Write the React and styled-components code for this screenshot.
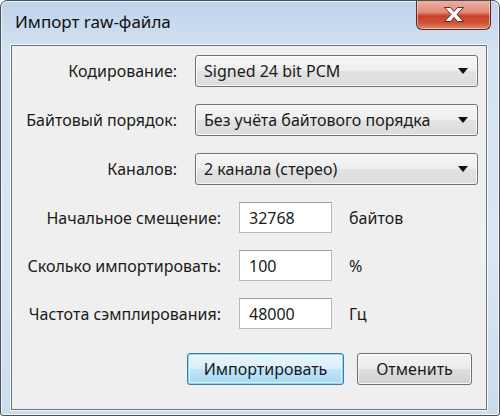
import { Fragment } from "react"
import styled, { createGlobalStyle } from "styled-components"

const Global = createGlobalStyle`
  html, body { margin: 0; padding: 0; background: #fff; }
  * { box-sizing: border-box; }
`

const UI_FONT = `"Noto Sans", "DejaVu Sans", sans-serif`

const Win = styled.div`
  width: 500px;
  height: 416px;
  display: flex;
  flex-direction: column;
  border: 1px solid #47515c;
  border-radius: 7px 7px 3px 3px;
  background: linear-gradient(180deg, #bfd3ea 0%, #d3e2f2 12%, #d9e6f3 60%, #cbdcee 100%);
  box-shadow: inset 0 0 0 1px rgba(255,255,255,0.7);
  font-family: ${UI_FONT};
  color: #1b1b1b;
  overflow: hidden;
`

const TitleBar = styled.div`
  height: 44px;
  display: flex;
  justify-content: space-between;
  align-items: flex-start;
  padding-left: 14px;
  padding-right: 8px;
`

const Title = styled.div`
  font-size: 17px;
  line-height: 1;
  padding-top: 12px;
  color: #111;
`

const CloseBtn = styled.div`
  width: 75px;
  height: 30px;
  margin-top: -1px;
  border: 1px solid #5a2a22;
  border-top: none;
  border-radius: 0 0 6px 6px;
  background: linear-gradient(180deg, #eeb3a6 0%, #e28a78 42%, #c9402a 55%, #cc5238 78%, #e5866a 100%);
  box-shadow: inset 0 0 0 1px rgba(255,255,255,0.45);
  display: flex;
  align-items: center;
  justify-content: center;
`

const Client = styled.div`
  flex: 1;
  margin: 0 12px 5px 10px;
  border: 1px solid #6b737b;
  box-shadow: 0 0 0 1px rgba(255,255,255,0.8);
  background: #efefef;
  padding: 9px 4px 23px 0;
  display: flex;
  flex-direction: column;
  gap: 17px;
`

const Grid = styled.div`
  display: grid;
  grid-template-columns: ${p => p.$label}px ${p => p.$field}px auto;
  column-gap: 18px;
  row-gap: 17px;
  align-items: center;
`

const Label = styled.div`
  text-align: right;
  font-size: 16px;
  white-space: nowrap;
`

const Combo = styled.div`
  height: 32px;
  border: 1px solid #737373;
  border-radius: 3px;
  background: linear-gradient(180deg, #f6f6f6 0%, #eeeeee 48%, #e2e2e2 52%, #dcdcdc 100%);
  box-shadow: inset 0 0 0 1px rgba(255,255,255,0.7);
  display: flex;
  align-items: center;
  justify-content: space-between;
  padding: 0 9px 0 8px;
  font-size: 16px;
  white-space: nowrap;
`

const Field = styled.div`
  height: 31px;
  background: #fff;
  border: 1px solid #b5b9be;
  border-top-color: #9a9ea4;
  display: flex;
  align-items: center;
  padding-left: 9px;
  font-size: 16px;
`

const Unit = styled.div`
  font-size: 16px;
  margin-left: -1px;
`

const Buttons = styled.div`
  display: flex;
  justify-content: flex-end;
  gap: 13px;
  margin-top: 7px;
  padding-right: 10px;
`

const Button = styled.div`
  width: ${p => p.$w}px;
  height: 32px;
  border-radius: 3px;
  display: flex;
  align-items: center;
  justify-content: center;
  font-size: 16px;
  border: 1px solid ${p => (p.$primary ? "#3d7bad" : "#707070")};
  background: ${p =>
    p.$primary
      ? "linear-gradient(180deg, #e9f5fd 0%, #d9effb 48%, #bee4f8 52%, #a9daf4 100%)"
      : "linear-gradient(180deg, #f4f4f4 0%, #ebebeb 48%, #dddddd 52%, #d0d0d0 100%)"};
  box-shadow: ${p =>
    p.$primary
      ? "inset 0 0 0 1px #8fd3f5, inset 0 0 0 2px rgba(255,255,255,0.5)"
      : "inset 0 0 0 1px rgba(255,255,255,0.8)"};
`

const Arrow = () => (
  <svg width="10" height="6" viewBox="0 0 10 6">
    <path d="M0 0 H10 L5 6 Z" fill="#111" />
  </svg>
)

const CloseIcon = () => (
  <svg width="22" height="17" viewBox="0 0 22 17">
    <path
      d="M1.5 1.5 H7.5 L11 5.5 L14.5 1.5 H20.5 L14 8.5 L20.5 15.5 H14.5 L11 11.5 L7.5 15.5 H1.5 L8 8.5 Z"
      fill="#fff"
      stroke="#6b2a20"
      strokeWidth="1"
      strokeLinejoin="round"
    />
  </svg>
)

const combos = [
  ["Кодирование:", "Signed 24 bit PCM"],
  ["Байтовый порядок:", "Без учёта байтового порядка"],
  ["Каналов:", "2 канала (стерео)"],
]

const fields = [
  ["Начальное смещение:", "32768", "байтов"],
  ["Сколько импортировать:", "100", "%"],
  ["Частота сэмплирования:", "48000", "Гц"],
]

export default function App() {
  return (
    <Win>
      <Global />
      <TitleBar>
        <Title>Импорт raw-файла</Title>
        <CloseBtn>
          <CloseIcon />
        </CloseBtn>
      </TitleBar>
      <Client>
        <Grid $label={165} $field={283}>
          {combos.map(([label, value]) => (
            <Fragment key={label}>
              <Label>{label}</Label>
              <Combo>
                <span>{value}</span>
                <Arrow />
              </Combo>
              <span />
            </Fragment>
          ))}
        </Grid>
        <Grid $label={209} $field={93}>
          {fields.map(([label, value, unit]) => (
            <Fragment key={label}>
              <Label>{label}</Label>
              <Field>{value}</Field>
              <Unit>{unit}</Unit>
            </Fragment>
          ))}
        </Grid>
        <Buttons>
          <Button $primary $w={157}>Импортировать</Button>
          <Button $w={115}>Отменить</Button>
        </Buttons>
      </Client>
    </Win>
  )
}
